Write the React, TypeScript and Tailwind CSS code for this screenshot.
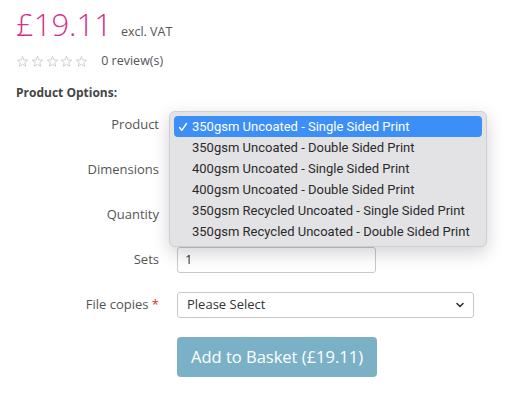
import React from "react";

const options = [
  "350gsm Uncoated - Single Sided Print",
  "350gsm Uncoated - Double Sided Print",
  "400gsm Uncoated - Single Sided Print",
  "400gsm Uncoated - Double Sided Print",
  "350gsm Recycled Uncoated - Single Sided Print",
  "350gsm Recycled Uncoated - Double Sided Print",
];

function Star() {
  return (
    <svg width="13" height="13" viewBox="0 0 24 24" fill="none" stroke="#c8c8c8" strokeWidth="1.6" strokeLinejoin="miter">
      <path d="M12 2.5l2.6 6.6 7.1.4-5.5 4.5 1.8 6.9L12 17l-6 3.9 1.8-6.9-5.5-4.5 7.1-.4z" />
    </svg>
  );
}

function Chevron() {
  return (
    <svg width="10" height="10" viewBox="0 0 10 10" fill="none" stroke="#333" strokeWidth="1.6" strokeLinecap="round" strokeLinejoin="round">
      <path d="M2 3.5l3 3 3-3" />
    </svg>
  );
}

function FakeSelect({ value, hidden }: { value: string; hidden?: boolean }) {
  return (
    <div className="w-[297px] h-[26px] border border-[#c9c9c9] rounded-[3px] bg-white flex items-center justify-between pl-[9px] pr-[8px] text-[13px] text-[#333]">
      <span className={hidden ? "invisible" : ""}>{value}</span>
      <Chevron />
    </div>
  );
}

function Row({ label, required, children }: { label: string; required?: boolean; children: React.ReactNode }) {
  return (
    <div className="flex items-center h-[26px]">
      <div className="w-[143px] text-right text-[13px] text-[#555]">
        {label}
        {required && <span className="text-[#d9302c]"> *</span>}
      </div>
      <div className="ml-[18px]">{children}</div>
    </div>
  );
}

export default function App() {
  return (
    <div className="w-[512px] h-[400px] bg-white overflow-hidden pl-4 pt-[5px]" style={{ fontFamily: '"Open Sans", sans-serif' }}>
      <div className="flex items-baseline">
        <span className="text-[31px] font-light text-[#d6308c] leading-[38px]">£19.11</span>
        <span className="ml-[9px] text-[12.5px] text-[#555]">excl. VAT</span>
      </div>
      <div className="flex items-center mt-[10px] h-[16px]">
        <div className="flex gap-[1.8px]">
          <Star /><Star /><Star /><Star /><Star />
        </div>
        <span className="ml-[13px] text-[12.5px] text-[#555]">0 review(s)</span>
      </div>
      <div className="mt-[15px] text-[12px] font-bold text-[#444]">Product Options:</div>

      <div className="mt-[10px] flex flex-col gap-[19px]">
        <Row label="Product">
          <div className="relative">
            <FakeSelect value="350gsm Uncoated - Single Sided Print" hidden />
            <div
              className="absolute left-[-8px] top-[-1px] w-[318px] bg-[#e3e3e6] rounded-[6px] border border-[#cfcfd3] shadow-[0_6px_18px_rgba(0,0,0,0.18)] px-[4px] py-[4px] z-10"
              style={{ fontFamily: 'Roboto, "Noto Sans", sans-serif' }}
            >
              {options.map((o, i) => (
                <div
                  key={o}
                  className={`h-[21px] flex items-center whitespace-nowrap rounded-[4px] text-[13px] ${i === 0 ? "bg-[#3c8ff7] text-white" : "text-[#2a2a2a]"}`}
                >
                  <span className="w-[18px] flex justify-center shrink-0">
                    {i === 0 && (
                      <svg width="10" height="10" viewBox="0 0 10 10" fill="none" stroke="white" strokeWidth="1.4" strokeLinecap="round" strokeLinejoin="round">
                        <path d="M1.5 5.5l2.3 2.8L8.5 1.5" />
                      </svg>
                    )}
                  </span>
                  <span>{o}</span>
                </div>
              ))}
            </div>
          </div>
        </Row>
        <Row label="Dimensions">
          <FakeSelect value="Please Select" hidden />
        </Row>
        <Row label="Quantity">
          <FakeSelect value="Please Select" hidden />
        </Row>
        <Row label="Sets">
          <div className="w-[199px] h-[26px] border border-[#c9c9c9] rounded-[3px] bg-white flex items-center pl-[7px] text-[13px] text-[#333]">1</div>
        </Row>
        <Row label="File copies" required>
          <FakeSelect value="Please Select" />
        </Row>
      </div>

      <div className="ml-[161px] mt-[19px]">
        <button className="w-[200px] h-[40px] rounded-[4px] bg-[#7bb1c7] text-white text-[16.5px]">Add to Basket (£19.11)</button>
      </div>
    </div>
  );
}
